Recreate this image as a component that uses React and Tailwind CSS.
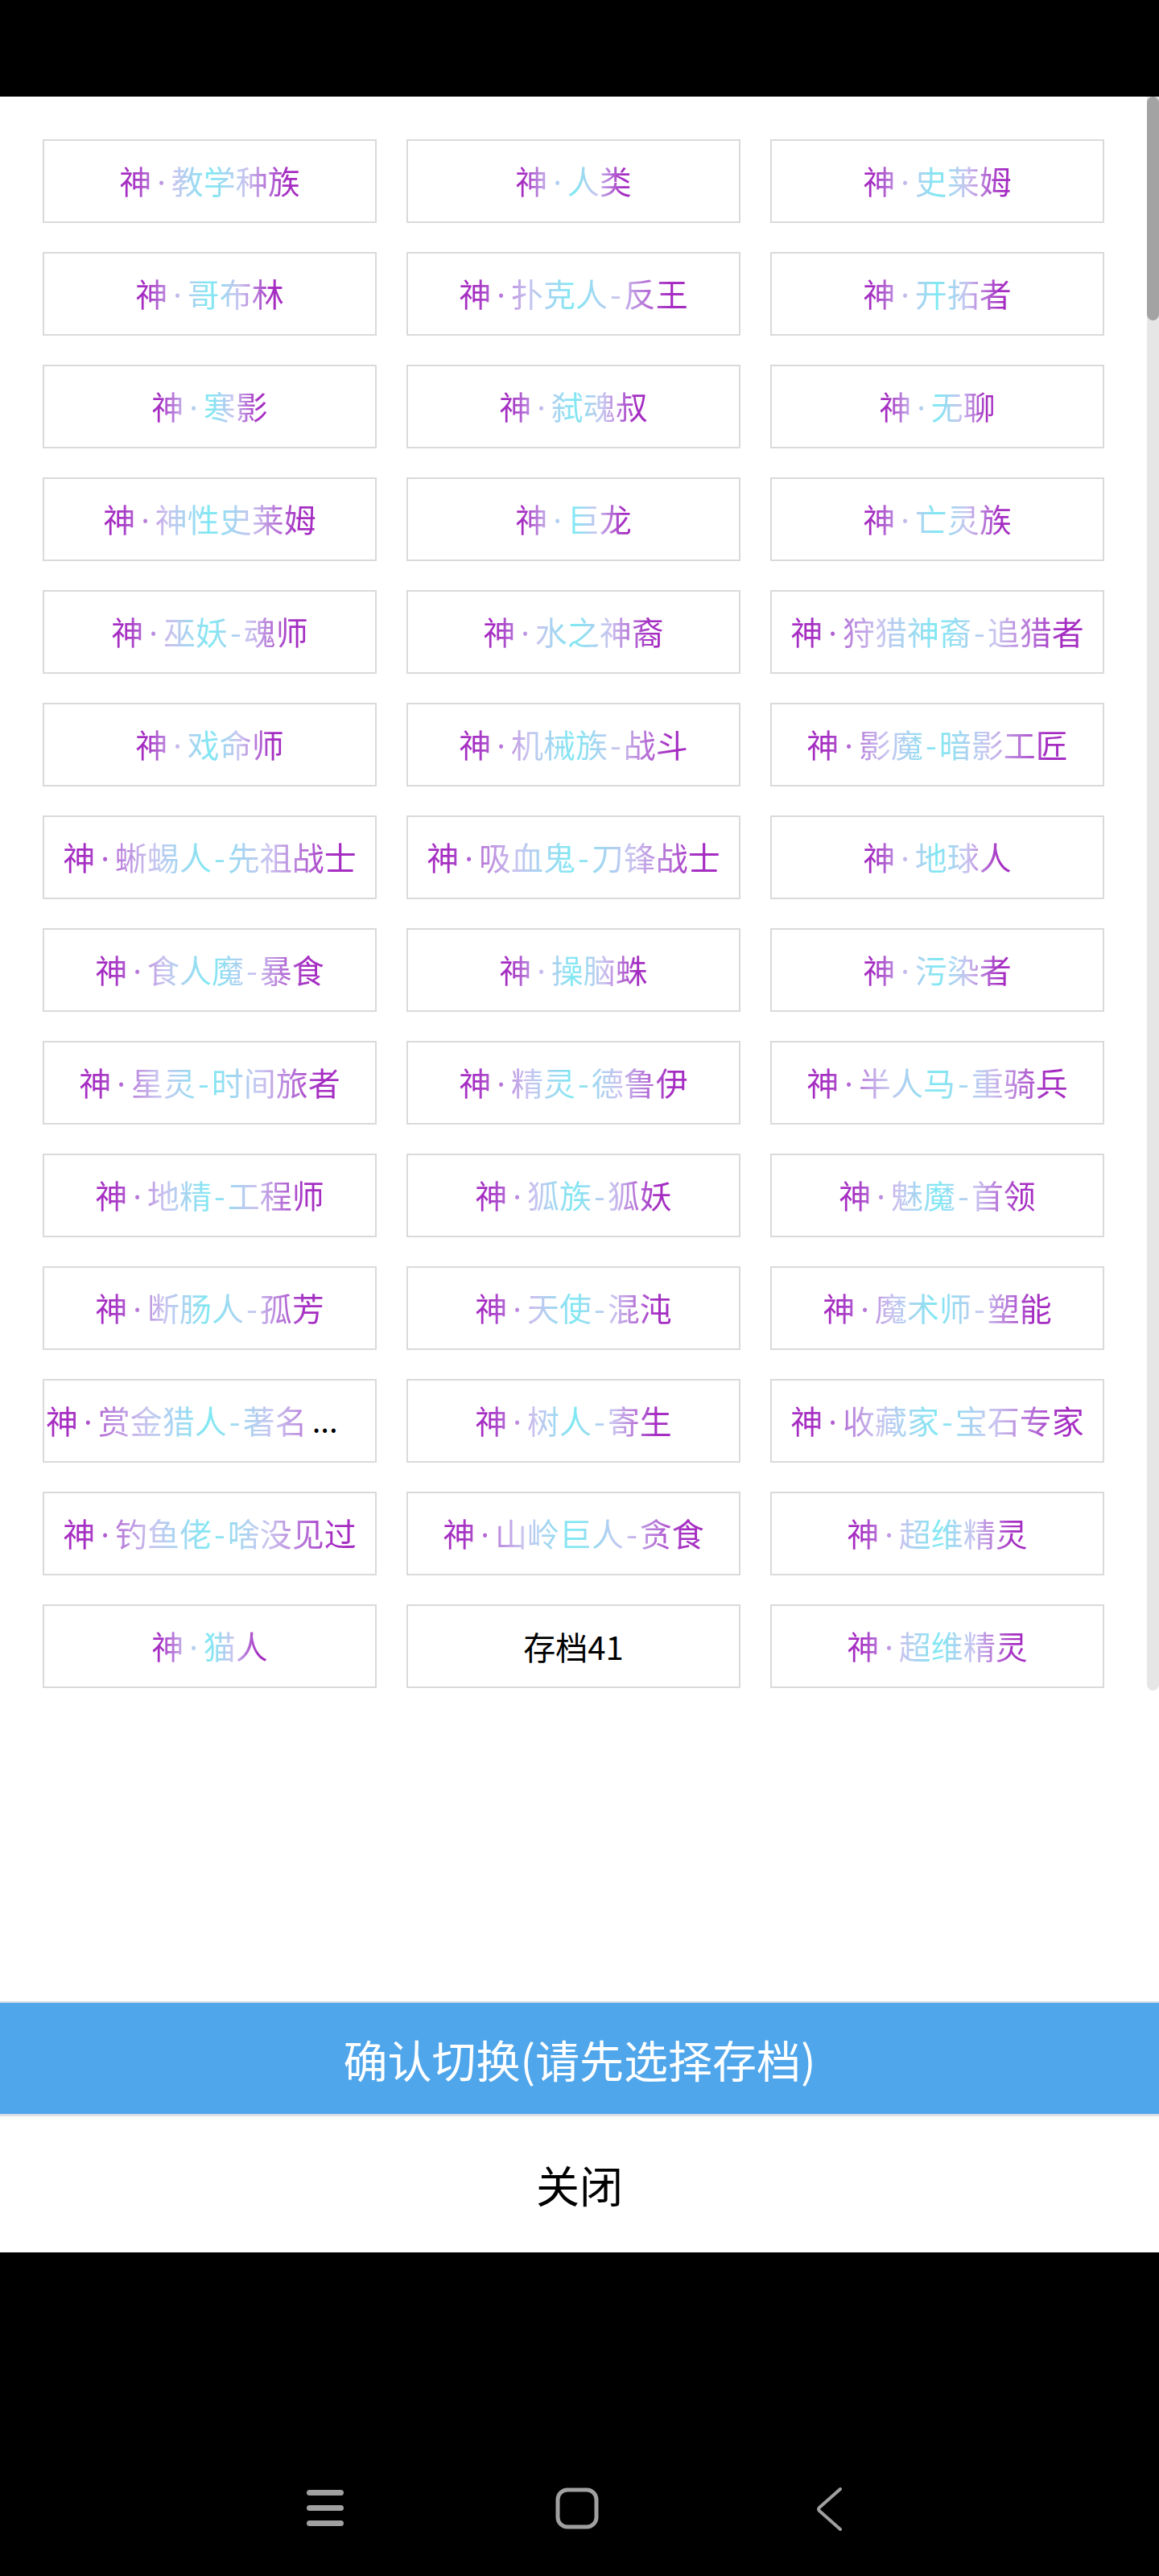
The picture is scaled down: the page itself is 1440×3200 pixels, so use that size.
import React from 'react';

const rows = [
  ['神·教学种族', '神·人类', '神·史莱姆'],
  ['神·哥布林', '神·扑克人-反王', '神·开拓者'],
  ['神·寒影', '神·弑魂叔', '神·无聊'],
  ['神·神性史莱姆', '神·巨龙', '神·亡灵族'],
  ['神·巫妖-魂师', '神·水之神裔', '神·狩猎神裔-追猎者'],
  ['神·戏命师', '神·机械族-战斗', '神·影魔-暗影工匠'],
  ['神·蜥蜴人-先祖战士', '神·吸血鬼-刀锋战士', '神·地球人'],
  ['神·食人魔-暴食', '神·操脑蛛', '神·污染者'],
  ['神·星灵-时间旅者', '神·精灵-德鲁伊', '神·半人马-重骑兵'],
  ['神·地精-工程师', '神·狐族-狐妖', '神·魅魔-首领'],
  ['神·断肠人-孤芳', '神·天使-混沌', '神·魔术师-塑能'],
  ['TRUNC', '神·树人-寄生', '神·收藏家-宝石专家'],
  ['神·钓鱼佬-啥没见过', '神·山岭巨人-贪食', '神·超维精灵'],
  ['神·猫人', 'PLAIN', '神·超维精灵'],
];

const gradient =
  'bg-[linear-gradient(90deg,#a52dc2_0%,#a52dc2_7%,#c9c3ef_30%,#7fe9f3_50%,#c9c3ef_70%,#a52dc2_92%,#a52dc2_100%)] bg-clip-text text-transparent';

// 神·xxx-yyy -> 神 + small latin dot + parts joined by a dash, all under one gradient
const GodName = ({ name, className = '' }) => {
  const parts = name.slice(2).split('-');
  return (
    <span className={`${gradient} ${className}`}>
      神<span className="mx-[7px] font-['Noto_Sans',sans-serif]">·</span>
      {parts.map((p, i) => (
        <React.Fragment key={i}>
          {i > 0 && <span className="mx-[3px]">-</span>}
          {p}
        </React.Fragment>
      ))}
    </span>
  );
};

const Slot = ({ name }) => {
  if (name === 'PLAIN') {
    return (
      <div className="h-[104px] border-2 border-[#dadada] flex items-center justify-center text-black">
        存档41
      </div>
    );
  }
  if (name === 'TRUNC') {
    return (
      <div className="h-[104px] border-2 border-[#dadada] flex items-center justify-start pl-[2px] overflow-hidden whitespace-nowrap">
        <GodName name="神·赏金猎人-著名" className="bg-size-[125%_100%]" />
        <span className="text-black ml-[6px] font-['Noto_Sans',sans-serif]">...</span>
      </div>
    );
  }
  return (
    <div className="h-[104px] border-2 border-[#dadada] flex items-center justify-center whitespace-nowrap overflow-hidden">
      <GodName name={name} />
    </div>
  );
};

const App = () => {
  return (
    <div className="w-[1440px] h-[3200px] bg-black flex flex-col font-['Noto_Sans_CJK_SC','Noto_Sans',sans-serif]">
      {/* status bar */}
      <div className="h-[120px] shrink-0" />

      {/* sheet */}
      <div className="h-[2678px] shrink-0 bg-white flex flex-col">
        <div className="h-[1980px] shrink-0 flex">
          <div className="flex-1 pt-[53px] pl-[53px]">
            <div className="grid grid-cols-[repeat(3,415px)] gap-x-[37px] gap-y-[36px] text-[40px] leading-none">
              {rows.flat().map((name, i) => (
                <Slot key={i} name={name} />
              ))}
            </div>
          </div>
          <div className="w-[15px] bg-[#e6e6e6] rounded-b-full">
            <div className="h-[278px] bg-[#a3a3a3] rounded-full" />
          </div>
        </div>

        <div className="flex-1" />

        <div className="h-[2px] bg-[#d9dee4]" />
        <button className="h-[138px] bg-[#4fa6ea] text-white text-[55px] leading-none flex items-center justify-center">
          确认切换(请先选择存档)
        </button>
        <div className="h-[3px] bg-[#d9dee4]" />
        <button className="h-[169px] bg-white text-black text-[54px] leading-none flex items-center justify-center">
          关闭
        </button>
      </div>

      {/* nav bar */}
      <div className="flex-1 flex items-start pt-[292px] pl-[381px]">
        <div className="w-[46px] h-[52px] flex flex-col gap-[12px] pt-[3px]">
          <div className="h-[7px] rounded-full bg-[#a0a0a0]" />
          <div className="h-[7px] rounded-full bg-[#a0a0a0]" />
          <div className="h-[7px] rounded-full bg-[#a0a0a0]" />
        </div>
        <svg className="ml-[263px]" width="54" height="52" viewBox="0 0 54 52">
          <rect x="3" y="3" width="48" height="46" rx="12" fill="none" stroke="#a0a0a0" strokeWidth="5" />
        </svg>
        <svg className="ml-[269px]" width="34" height="54" viewBox="0 0 34 54">
          <path d="M31 2 L5 25 Q3 27 5 29 L31 52" fill="none" stroke="#a0a0a0" strokeWidth="4" strokeLinecap="round" strokeLinejoin="round" />
        </svg>
      </div>
    </div>
  );
};

export default App;
